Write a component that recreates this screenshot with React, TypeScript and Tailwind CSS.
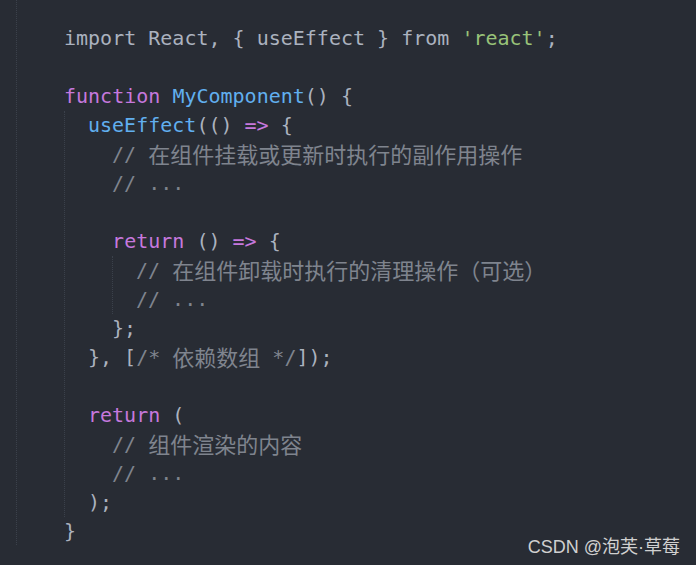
import React from "react";

const P = ({ children }: { children: React.ReactNode }) => <span className="text-[#abb2bf]">{children}</span>;
const K = ({ children }: { children: React.ReactNode }) => <span className="text-[#c678dd]">{children}</span>;
const F = ({ children }: { children: React.ReactNode }) => <span className="text-[#61afef]">{children}</span>;
const S = ({ children }: { children: React.ReactNode }) => <span className="text-[#98c379]">{children}</span>;
const C = ({ children }: { children: React.ReactNode }) => <span className="text-[#7f848e]">{children}</span>;
const CJ = ({ children }: { children: React.ReactNode }) => (
  <span className="inline-block align-top h-[29px] leading-[27px] text-[#7f848e] text-[22px] [font-family:'Noto_Sans_CJK_SC',sans-serif]">
    {children}
  </span>
);

const Line = ({ children }: { children?: React.ReactNode }) => (
  <div className="h-[29px] leading-[29px] whitespace-pre">{children}</div>
);

export default function App() {
  return (
    <div className="relative w-[696px] h-[565px] bg-[#282c34] pl-4 overflow-hidden">
      <div
        className="h-[545px] border-l border-dotted border-[#3b414b] pl-[47px] pt-[24px] text-[20px] text-[#abb2bf]"
        style={{ fontFamily: "'DejaVu Sans Mono', 'Noto Sans CJK SC', monospace" }}
      >
        <Line>
          <P>import React, {"{"} useEffect {"}"} from </P>
          <S>'react'</S>
          <P>;</P>
        </Line>
        <Line />
        <Line>
          <K>function</K>
          <P> </P>
          <F>MyComponent</F>
          <P>() {"{"}</P>
        </Line>
        <div className="border-l border-dotted border-[#3b414b] pl-[23px]">
          <Line>
            <F>useEffect</F>
            <P>(() </P>
            <K>=&gt;</K>
            <P> {"{"}</P>
          </Line>
          <Line>
            <C>{"  // "}</C>
            <CJ>在组件挂载或更新时执行的副作用操作</CJ>
          </Line>
          <Line>
            <C>{"  // ..."}</C>
          </Line>
          <Line />
          <Line>
            <P>{"  "}</P>
            <K>return</K>
            <P> () </P>
            <K>=&gt;</K>
            <P> {"{"}</P>
          </Line>
          <div className="ml-[24px] border-l border-dotted border-[#3b414b] pl-[23px]">
            <Line>
              <C>{"// "}</C>
              <CJ>在组件卸载时执行的清理操作（可选）</CJ>
            </Line>
            <Line>
              <C>{"// ..."}</C>
            </Line>
          </div>
          <Line>
            <P>{"  };"}</P>
          </Line>
          <Line>
            <P>{"}, ["}</P>
            <C>{"/* "}</C>
            <CJ>依赖数组</CJ>
            <C>{" */"}</C>
            <P>{"]);"}</P>
          </Line>
          <Line />
          <Line>
            <K>return</K>
            <P> (</P>
          </Line>
          <Line>
            <C>{"  // "}</C>
            <CJ>组件渲染的内容</CJ>
          </Line>
          <Line>
            <C>{"  // ..."}</C>
          </Line>
          <Line>
            <P>);</P>
          </Line>
        </div>
        <Line>
          <P>{"}"}</P>
        </Line>
      </div>
      <div
        className="absolute right-[16px] bottom-[7px] text-[18px] leading-[22px] text-[#d0d0d0]"
        style={{ fontFamily: "'Liberation Sans', 'Noto Sans CJK SC', sans-serif" }}
      >
        CSDN @泡芙·草莓
      </div>
    </div>
  );
}
